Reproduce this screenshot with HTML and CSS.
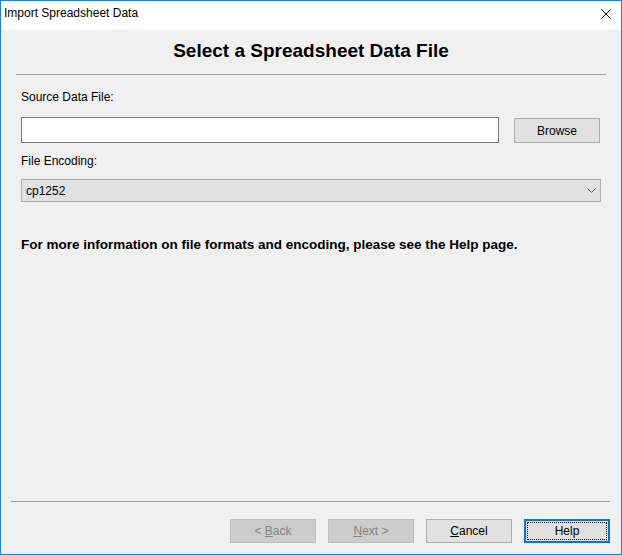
FILE: index.html
```html
<!DOCTYPE html>
<html>
<head>
<meta charset="utf-8">
<link rel="stylesheet" href="styles.css">
</head>
<body>
<div class="window">
  <div class="titlebar">
    <span class="title">Import Spreadsheet Data</span>
    <span class="close"><svg width="10" height="10" viewBox="0 0 10 10"><path d="M0.5 0.5 L9.5 9.5 M9.5 0.5 L0.5 9.5" stroke="#000" stroke-width="1" fill="none"/></svg></span>
  </div>
  <div class="content">
    <div class="main">
      <h1 class="heading">Select a Spreadsheet Data File</h1>
      <div class="sep top-sep"></div>
      <div class="form">
        <div class="label first">Source Data File:</div>
        <div class="file-row">
          <div class="textbox"></div>
          <div class="btn browse"><span>Browse</span></div>
        </div>
        <div class="label second">File Encoding:</div>
        <div class="select">
          <span>cp1252</span>
          <svg class="chev" width="9" height="5" viewBox="0 0 9 5"><path d="M0.5 0.5 L4.5 4.5 L8.5 0.5" stroke="#606060" stroke-width="1" fill="none"/></svg>
        </div>
        <p class="info">For more information on file formats and encoding, please see the Help page.</p>
      </div>
    </div>
    <div class="footer">
      <div class="sep bottom-sep"></div>
      <div class="buttons">
        <div class="btn disabled"><span>&lt; <u>B</u>ack</span></div>
        <div class="btn disabled"><span><u>N</u>ext &gt;</span></div>
        <div class="btn"><span><u>C</u>ancel</span></div>
        <div class="btn focused"><span class="focus">Help</span></div>
      </div>
    </div>
  </div>
</div>
</body>
</html>
```

FILE: styles.css
```css
* { box-sizing: border-box; }
html, body { margin: 0; padding: 0; }
body {
  width: 622px;
  height: 555px;
  font-family: "Liberation Sans", Arial, sans-serif;
  font-size: 12px;
  color: #000;
}
.window {
  width: 622px;
  height: 555px;
  border: 1px solid #1883d7;
  display: flex;
  flex-direction: column;
  background: #f0f0f0;
}
.titlebar {
  height: 29px;
  background: #fff;
  display: flex;
  align-items: flex-start;
  justify-content: space-between;
}
.title {
  padding-left: 3px;
  padding-top: 5px;
  line-height: 15px;
  font-size: 12px;
}
.close {
  width: 10px;
  height: 10px;
  margin-top: 8px;
  margin-right: 10px;
  display: block;
}
.close svg { display: block; }
.content {
  flex: 1;
  display: flex;
  flex-direction: column;
}
.main { flex: 1; }
.heading {
  margin: 9px 0 0;
  font-size: 19px;
  line-height: 24px;
  font-weight: bold;
  text-align: center;
  height: 35px;
}
.sep {
  height: 1px;
  background: #a0a0a0;
}
.top-sep { margin: 0 15px; }
.form {
  padding: 0 19px 0 20px;
}
.label {
  font-size: 12px;
  line-height: 15px;
}
.label.first { margin-top: 15px; }
.label.second { margin-top: 11px; }
.file-row {
  display: flex;
  align-items: flex-start;
  margin-top: 12px;
}
.textbox {
  width: 478px;
  height: 26px;
  background: #fff;
  border: 1px solid #7a7a7a;
}
.btn {
  width: 86px;
  height: 24px;
  background: #e1e1e1;
  border: 1px solid #adadad;
  display: flex;
  align-items: center;
  justify-content: center;
  font-size: 12px;
}
.browse {
  margin-left: 15px;
  margin-top: 1px;
  height: 25px;
}
.select {
  margin-top: 10px;
  width: 580px;
  height: 23px;
  background: #e1e1e1;
  border: 1px solid #adadad;
  display: flex;
  align-items: center;
  justify-content: space-between;
  padding: 0 4px 0 4px;
}
.chev { display: block; }
.info {
  margin: 35px 0 0;
  font-size: 13.5px;
  line-height: 16px;
  font-weight: bold;
}
.bottom-sep { margin: 0 11px 0 10px; }
.footer {
  padding-bottom: 11px;
}
.buttons {
  display: flex;
  justify-content: flex-end;
  gap: 12px;
  margin-top: 17px;
  padding-right: 11px;
}
.btn.disabled {
  background: #cccccc;
  border-color: #bfbfbf;
  color: #838383;
}
.btn.focused {
  border: 2px solid #0078d7;
  padding: 1px;
}
.focus {
  width: 100%;
  height: 100%;
  border: 1px dotted #000;
  display: flex;
  align-items: center;
  justify-content: center;
}
```
